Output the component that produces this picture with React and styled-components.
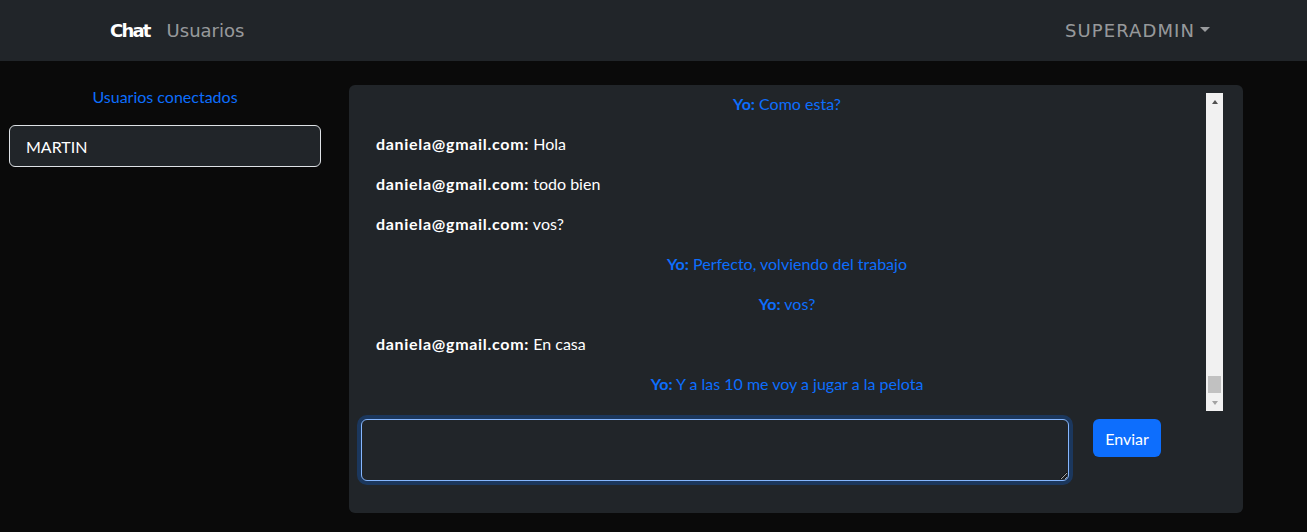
import React from "react";
import styled, { createGlobalStyle } from "styled-components";

const Global = createGlobalStyle`
  html, body { margin: 0; padding: 0; }
  body {
    background: #0a0a0a;
    font-family: "Segoe UI", "Lato", "Noto Sans", sans-serif;
    font-size: 16px;
    color: #fff;
  }
  * { box-sizing: border-box; }
`;

const Navbar = styled.nav`
  height: 61px;
  background: #212529;
  display: flex;
  align-items: center;
  justify-content: space-between;
  padding: 0 97px 0 110px;
  font-family: "DejaVu Sans", "Comic Sans MS", sans-serif;
  font-size: 18px;
`;

const NavLinks = styled.div`
  display: flex;
  gap: 17px;
  align-items: center;
`;

const NavLink = styled.a`
  color: ${(p) => (p.$active ? "#fff" : "rgba(255,255,255,0.55)")};
  font-weight: ${(p) => (p.$active ? 700 : 400)};
  text-decoration: none;
  letter-spacing: ${(p) => (p.$active ? "-1.8px" : "0")};
`;

const Dropdown = styled.a`
  color: rgba(255, 255, 255, 0.55);
  display: flex;
  align-items: center;
  gap: 5px;
  text-decoration: none;
  letter-spacing: 1.1px;
  &::after {
    content: "";
    border-top: 5px solid currentColor;
    border-left: 5px solid transparent;
    border-right: 5px solid transparent;
    margin-top: -2px;
  }
`;

const Main = styled.div`
  display: grid;
  grid-template-columns: 330px 894px;
  column-gap: 19px;
  padding-top: 24px;
`;

const Sidebar = styled.aside`
  display: flex;
  flex-direction: column;
  align-items: stretch;
  padding: 0 9px;
`;

const SideTitle = styled.div`
  color: #0d6efd;
  text-align: center;
  line-height: 24px;
  margin-bottom: 16px;
`;

const UserItem = styled.div`
  border: 1px solid #dee2e6;
  border-radius: 6px;
  background: #212529;
  height: 42px;
  display: flex;
  align-items: center;
  padding-left: 16px;
  color: #fff;
  width: 312px;
`;

const Panel = styled.section`
  background: #212529;
  border-radius: 6px;
  padding: 8px 20px 32px 12px;
  display: flex;
  flex-direction: column;
  gap: 8px;
  height: 428px;
`;

const ScrollBox = styled.div`
  height: 318px;
  display: flex;
`;

const MessageList = styled.div`
  flex: 1;
  overflow: hidden;
  display: flex;
  flex-direction: column;
  justify-content: flex-end;
  padding: 0 8px 0 15px;
`;

const Scrollbar = styled.div`
  width: 17px;
  background: #f1f1f1;
  display: flex;
  flex-direction: column;
`;

const ScrollButton = styled.div`
  height: 17px;
  display: flex;
  align-items: center;
  justify-content: center;
  &::before {
    content: "";
    border-left: 3.5px solid transparent;
    border-right: 3.5px solid transparent;
    ${(p) =>
      p.$up
        ? "border-bottom: 4px solid #505050;"
        : "border-top: 4px solid #a3a3a3;"}
  }
`;

const ScrollTrack = styled.div`
  flex: 1;
  display: flex;
  flex-direction: column;
  justify-content: flex-end;
  padding: 0 2px 1px;
`;

const ScrollThumb = styled.div`
  height: 17px;
  background: #c1c1c1;
`;

const Msg = styled.p`
  margin: 0 0 16px 0;
  line-height: 24px;
  text-align: ${(p) => (p.$mine ? "center" : "left")};
  color: ${(p) => (p.$mine ? "#0d6efd" : "#fff")};
  &:last-child { margin-bottom: 15px; }
`;

const Author = styled.b`
  font-weight: 700;
  letter-spacing: ${(p) => (p.$mine ? "0" : "0.7px")};
`;

const InputRow = styled.div`
  display: flex;
  align-items: flex-start;
  gap: 24px;
`;

const TextArea = styled.textarea`
  width: 708px;
  height: 62px;
  background: #212529;
  color: #fff;
  caret-color: #fff;
  border: 1px solid #86b7fe;
  border-radius: 6px;
  box-shadow: 0 0 0 4px rgba(13, 110, 253, 0.25);
  outline: none;
  padding: 6px 12px;
  font-family: inherit;
  font-size: 16px;
  line-height: 24px;
`;

const Button = styled.button`
  background: #0d6efd;
  color: #fff;
  border: none;
  border-radius: 6px;
  height: 38px;
  width: 68px;
  font-family: inherit;
  font-size: 16px;
`;

const messages = [
  { mine: true, who: "Yo", text: "Como esta?" },
  { mine: false, who: "daniela@gmail.com", text: "Hola" },
  { mine: false, who: "daniela@gmail.com", text: "todo bien" },
  { mine: false, who: "daniela@gmail.com", text: "vos?" },
  { mine: true, who: "Yo", text: "Perfecto, volviendo del trabajo" },
  { mine: true, who: "Yo", text: "vos?" },
  { mine: false, who: "daniela@gmail.com", text: "En casa" },
  { mine: true, who: "Yo", text: "Y a las 10 me voy a jugar a la pelota" },
];

export default function App() {
  return (
    <>
      <Global />
      <Navbar>
        <NavLinks>
          <NavLink $active href="#">Chat</NavLink>
          <NavLink href="#">Usuarios</NavLink>
        </NavLinks>
        <Dropdown href="#">SUPERADMIN</Dropdown>
      </Navbar>
      <Main>
        <Sidebar>
          <SideTitle>Usuarios conectados</SideTitle>
          <UserItem>MARTIN</UserItem>
        </Sidebar>
        <Panel>
          <ScrollBox>
            <MessageList>
              {messages.map((m, i) => (
                <Msg key={i} $mine={m.mine}>
                  <Author $mine={m.mine}>{m.who}:</Author> {m.text}
                </Msg>
              ))}
            </MessageList>
            <Scrollbar>
              <ScrollButton $up />
              <ScrollTrack>
                <ScrollThumb />
              </ScrollTrack>
              <ScrollButton />
            </Scrollbar>
          </ScrollBox>
          <InputRow>
            <TextArea autoFocus />
            <Button>Enviar</Button>
          </InputRow>
        </Panel>
      </Main>
    </>
  );
}
